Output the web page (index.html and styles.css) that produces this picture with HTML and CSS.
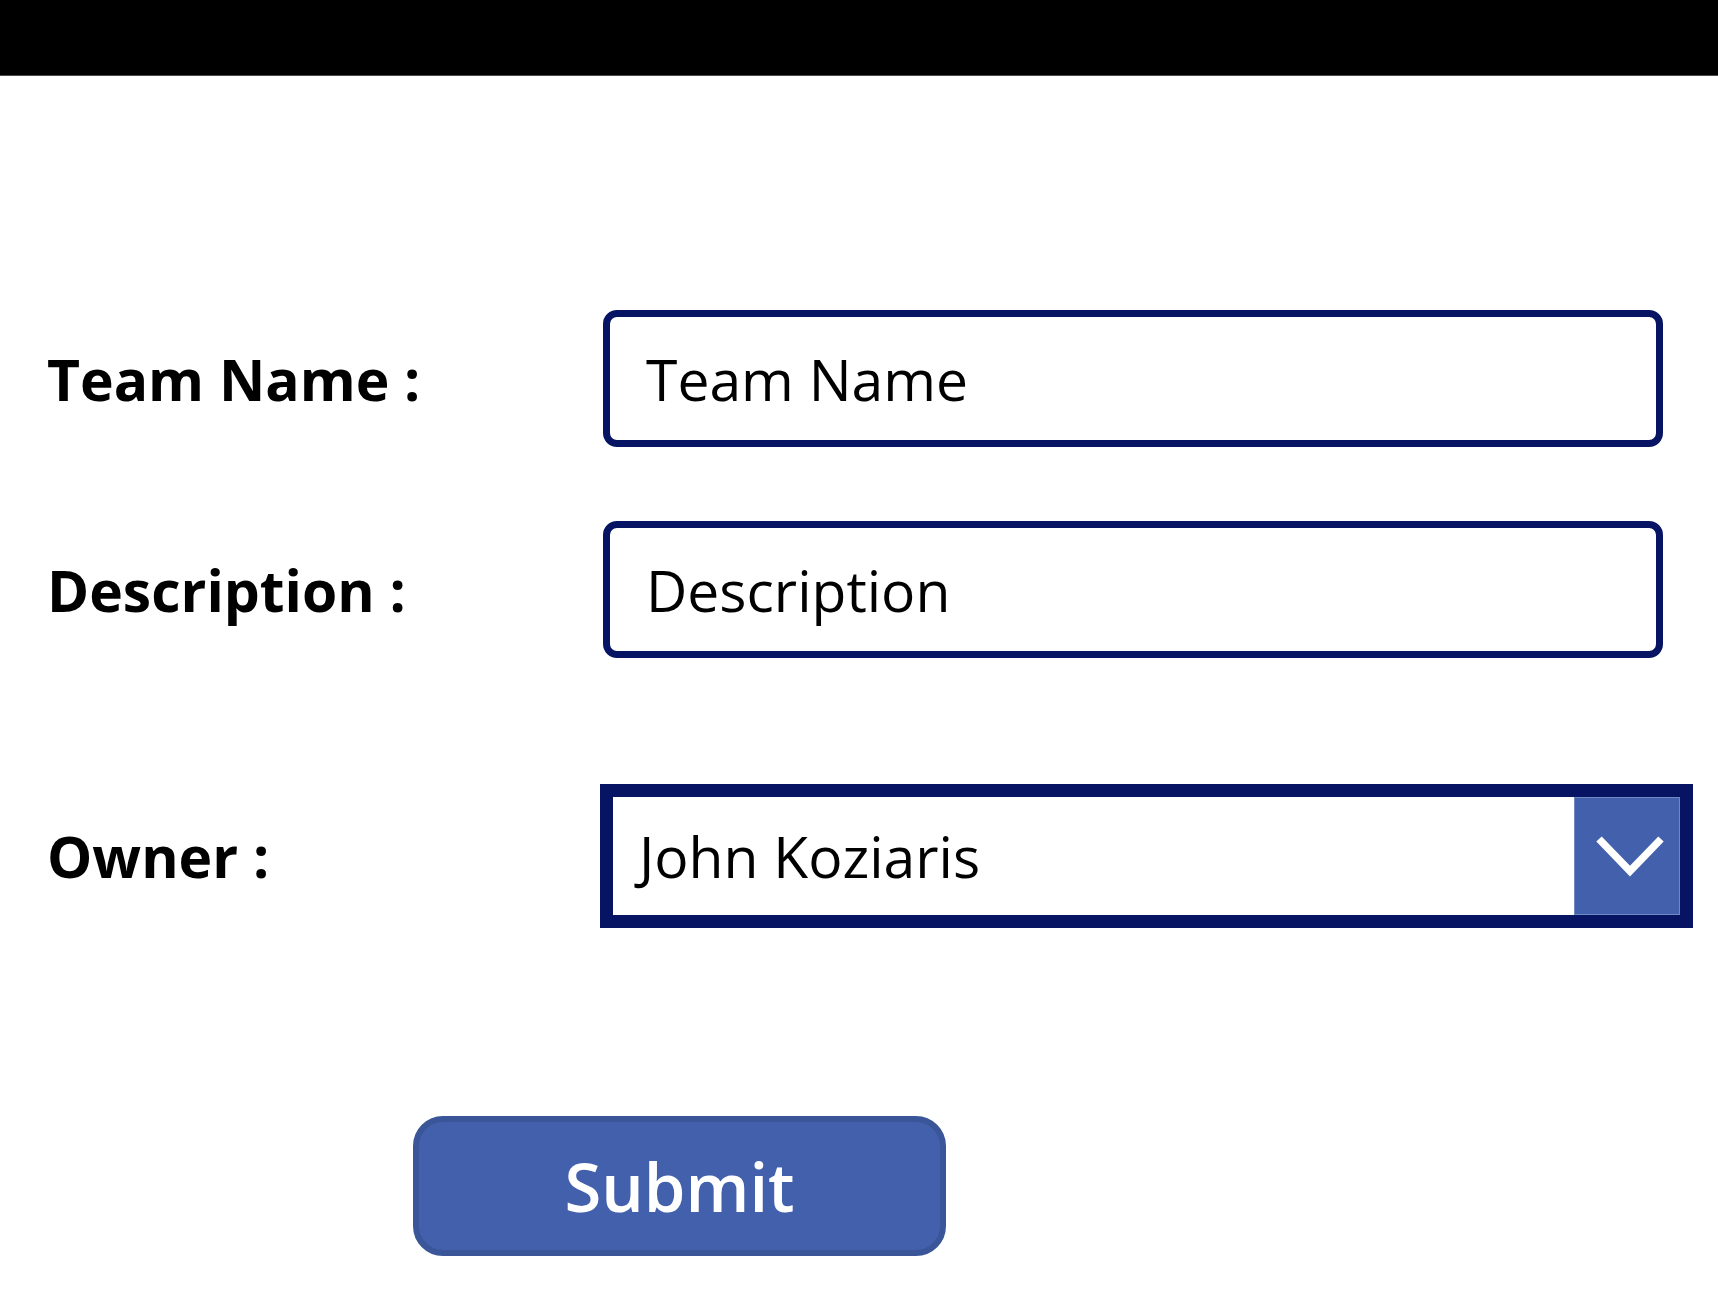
FILE: index.html
```html
<!DOCTYPE html>
<html lang="en">
<head>
<meta charset="utf-8">
<title>New Team</title>
<link rel="stylesheet" href="styles.css">
</head>
<body>
<header class="topbar"></header>
<main class="form">
  <div class="row row-team">
    <label class="label label-wide">Team Name :</label>
    <div class="input">Team Name</div>
  </div>
  <div class="row row-desc">
    <label class="label label-wide">Description :</label>
    <div class="input">Description</div>
  </div>
  <div class="row row-owner">
    <label class="label label-owner">Owner :</label>
    <div class="dropdown">
      <span class="dropdown-value">John Koziaris</span>
      <span class="dropdown-toggle">
        <svg width="104" height="118" viewBox="0 0 104 118" aria-hidden="true">
          <polyline points="24,42 55,74 86,42" fill="none" stroke="#ffffff" stroke-width="7.5" stroke-linecap="butt" stroke-linejoin="miter"/>
        </svg>
      </span>
    </div>
  </div>
  <div class="actions">
    <button class="submit" type="button">Submit</button>
  </div>
</main>
</body>
</html>
```

FILE: styles.css
```css
html, body {
  margin: 0;
  padding: 0;
  background: #ffffff;
}

body {
  font-family: "Open Sans", "Noto Sans", "Liberation Sans", sans-serif;
  color: #000000;
}

.topbar {
  height: 75px;
  background: #000000;
  border-bottom: 1px solid #4a4a4a;
}

.form {
  display: flex;
  flex-direction: column;
  padding-left: 47px;
}

.row {
  display: flex;
  align-items: center;
}

.row-team {
  margin-top: 234px;
}

.row-desc {
  margin-top: 74px;
}

.row-owner {
  margin-top: 126px;
}

.label {
  font-size: 57px;
  font-weight: 700;
  line-height: normal;
  white-space: nowrap;
}

.label-wide {
  flex: 0 0 556px;
}

.label-owner {
  flex: 0 0 553px;
}

.input {
  box-sizing: border-box;
  width: 1060px;
  height: 137px;
  border: 7px solid #061463;
  border-radius: 14px;
  padding-left: 36px;
  display: flex;
  align-items: center;
  font-size: 57px;
  font-weight: 400;
  line-height: normal;
  color: #000000;
}

.dropdown {
  box-sizing: border-box;
  width: 1093px;
  height: 144px;
  border: 13px solid #061463;
  display: flex;
  align-items: stretch;
}

.dropdown-value {
  flex: 1 1 auto;
  display: flex;
  align-items: center;
  padding-left: 26px;
  font-size: 57px;
  font-weight: 400;
  line-height: normal;
}

.dropdown-toggle {
  box-sizing: border-box;
  flex: 0 0 105px;
  background: #4360ad;
  border: 1px solid #7188c6;
  display: flex;
  align-items: center;
  justify-content: center;
}

.dropdown-toggle svg {
  display: block;
}

.actions {
  display: flex;
  margin-top: 188px;
  padding-left: 366px;
}

.submit {
  box-sizing: border-box;
  width: 533px;
  height: 140px;
  background: #4360ad;
  border: 6px solid #3a5598;
  border-radius: 30px;
  color: #ffffff;
  font-family: "Open Sans", "Noto Sans", "Liberation Sans", sans-serif;
  font-size: 67px;
  font-weight: 600;
  line-height: normal;
  padding: 0;
  cursor: pointer;
}
```
